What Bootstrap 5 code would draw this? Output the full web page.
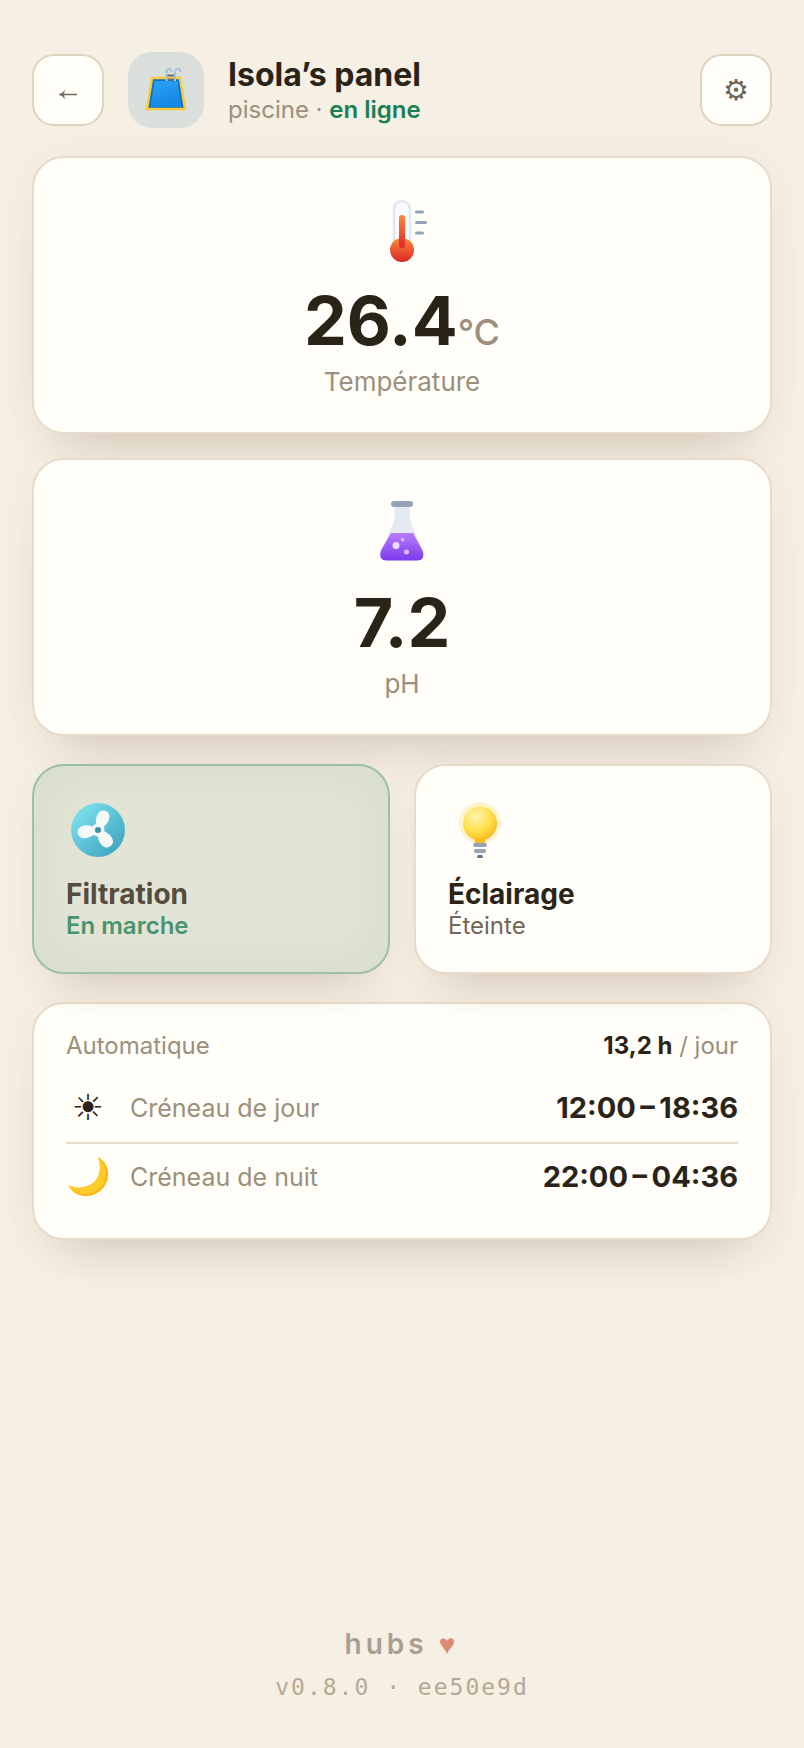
<!DOCTYPE html>
<html lang="fr">
<head>
<meta charset="utf-8">
<meta name="viewport" content="width=device-width, initial-scale=1">
<title>Isola’s panel</title>
<link href="https://cdn.jsdelivr.net/npm/bootstrap@5.3.0/dist/css/bootstrap.min.css" rel="stylesheet">
<style>
  :root {
    --ink: #2a2318;
    --soft: #73675a;
    --muted: #9c8f7c;
    --line: #e7dccb;
    --paper: #fffef8;
    --green: #1b7f55;
    --lift: 0 4px 48px rgba(150, 100, 50, .05), 0 32px 48px -32px rgba(90, 60, 35, .26);
  }
  body { background: #f5efe4; color: var(--ink); font-family: Inter, "Noto Sans", sans-serif; font-size: 24px; line-height: 32px; }
  .screen { padding: 52px 32px 45px; }
  .text-soft { color: var(--soft); }
  .text-quiet { color: var(--muted); }
  .text-live { color: var(--green); font-weight: 600; }
  .topbar { gap: 24px; margin-bottom: 28px; }
  .icon-btn { width: 72px; height: 72px; background: var(--paper); border: 2px solid #e0d3bd; border-radius: 22px; color: var(--soft); font-family: "DejaVu Sans", sans-serif; font-size: 29px; }
  .hub-tile { width: 76px; height: 76px; background: #dadfdb; border-radius: 24px; }
  .hub-name { padding-top: 2px; }
  .hub-title { font-size: 32px; line-height: 38px; font-weight: 700; }
  .panel { background: var(--paper); border: 2px solid var(--line); border-radius: 32px; box-shadow: var(--lift); color: var(--ink); }
  .metrics { gap: 24px; margin-bottom: 28px; }
  .metric { padding: 36px 32px 32px; }
  .metric-value { font-size: 68px; line-height: 72px; font-weight: 700; margin: 18px 0 8px; }
  .metric-unit { font-size: 36px; line-height: 36px; font-weight: 500; color: var(--muted); }
  .metric-label { font-size: 26px; line-height: 36px; color: var(--muted); }
  .switches { display: grid; grid-template-columns: 1fr 1fr; gap: 24px; margin-bottom: 28px; }
  .switch-tile { padding: 32px; }
  .switch-name { font-size: 28px; line-height: 36px; font-weight: 700; margin-top: 14px; }
  .switch-state { line-height: 28px; }
  .switch-tile.is-on { background: #e3e4d6; border-color: #9dbfa7; box-shadow: inset 0 0 56px rgba(27, 127, 85, .08), var(--lift); }
  .is-on .switch-name { color: #554c40; }
  .is-on .switch-state { color: #49946f; font-weight: 600; }
  .plan { padding: 26px 32px 28px; }
  .plan-head { margin-bottom: 12px; }
  .plan-total { color: var(--ink); font-weight: 700; }
  .slot { height: 66px; }
  .slot-day { height: 70px; border-bottom: 2px solid var(--line); }
  .slot-icon { width: 44px; margin-right: 20px; font-family: "DejaVu Sans", sans-serif; font-size: 36px; }
  .slot-label { font-size: 25px; line-height: 36px; color: var(--muted); }
  .slot-time { font-size: 29px; font-weight: 700; }
  .brand { font-size: 28px; line-height: 40px; font-weight: 600; letter-spacing: 4px; color: #a89e92; }
  .brand span { color: #da8b72; font-family: "Liberation Sans", "DejaVu Sans", sans-serif; font-size: 28px; font-weight: 400; }
  .version { font-family: "DejaVu Sans Mono", monospace; font-size: 23px; line-height: 32px; letter-spacing: 2px; color: #b5a993; margin-top: 6px; }
</style>
</head>
<body>
<div class="screen d-flex flex-column min-vh-100">
  <header class="topbar d-flex align-items-center">
    <button type="button" class="icon-btn d-flex align-items-center justify-content-center p-0" aria-label="Retour">
      <svg width="24" height="24" viewBox="0 0 24 24" fill="none" stroke="currentColor" aria-hidden="true"><path d="M4 16.500H21" stroke-width="1.500"/><path d="M3 16.500Q7 15.500 8.500 12.500L7.500 16.500L8.500 20.500Q7 17.500 3 16.500Z" fill="currentColor" stroke-width=".5"/></svg>
    </button>
    <div class="hub-tile d-flex align-items-center justify-content-center">
      <svg width="48" height="48" viewBox="0 0 48 48" aria-hidden="true">
        <defs><linearGradient id="water" x1="0" y1="0" x2="0.400" y2="1"><stop stop-color="#2ba2f5"/><stop offset="1" stop-color="#1388e4"/></linearGradient></defs>
        <path d="M10 12H38L43 43H5Z" fill="#0872c4" stroke="#ffca3a" stroke-width="2.500" stroke-linejoin="round"/>
        <path d="M12.500 15H35.500L39.500 41H8.500Z" fill="url(#water)"/>
        <path d="M25 9.500H32M25 13.500H32" stroke="#65727c" stroke-width="2"/>
        <path d="M24.500 15V6Q24.500 3 27.500 3Q29.500 3 29.500 6M33 15V6Q33 3 36 3Q38.500 3 38.500 6" fill="none" stroke="#abc1d9" stroke-width="2"/>
      </svg>
    </div>
    <div class="hub-name flex-grow-1">
      <h1 class="hub-title mb-0">Isola’s panel</h1>
      <div class="text-quiet">piscine · <span class="text-live">en ligne</span></div>
    </div>
    <button type="button" class="icon-btn d-flex align-items-center justify-content-center p-0" aria-label="Réglages">⚙</button>
  </header>

  <main>
    <section class="metrics d-flex flex-column">
      <div class="panel metric text-center">
        <svg class="d-block mx-auto" width="72" height="72" viewBox="0 0 72 72" aria-hidden="true">
          <defs><linearGradient id="heat" x1="0" y1="0" x2="0" y2="1"><stop stop-color="#fb8b3c"/><stop offset="1" stop-color="#dc2626"/></linearGradient></defs>
          <rect x="28" y="7" width="16" height="48" rx="8" fill="#f8fafc" stroke="#e2e8f0" stroke-width="2.500"/>
          <circle cx="36" cy="56" r="12" fill="url(#heat)"/>
          <rect x="33" y="21" width="6" height="33" rx="3" fill="url(#heat)"/>
          <path d="M50.500 18H56.500M50.500 28.500H59.500M50.500 39H56.500" stroke="#94a3b8" stroke-width="3" stroke-linecap="round"/>
        </svg>
        <div class="metric-value">26.4<span class="metric-unit">°C</span></div>
        <div class="metric-label">Température</div>
      </div>
      <div class="panel metric text-center">
        <svg class="d-block mx-auto" width="72" height="72" viewBox="0 0 72 72" aria-hidden="true">
          <defs><linearGradient id="acid" x1="0" y1="0" x2="0" y2="1"><stop stop-color="#b87cfb"/><stop offset="1" stop-color="#7c3aed"/></linearGradient></defs>
          <path d="M28.500 9H44V24L56.500 55Q59 64.500 51 64.500H21Q13 64.500 15 55L28.500 24Z" fill="#e4e9f2"/>
          <path d="M25 37H47L56.500 54.500Q59.500 64.500 51 64.500H21Q12 64.500 15 54.500Z" fill="url(#acid)"/>
          <rect x="25" y="5" width="22" height="6" rx="3" fill="#94a3b8"/>
          <g fill="#ecdcff"><circle cx="30" cy="49.500" r="3.500"/><circle cx="36.600" cy="43.600" r="1.800" opacity=".7"/><circle cx="40.500" cy="56" r="2.500" opacity=".8"/></g>
        </svg>
        <div class="metric-value">7.2</div>
        <div class="metric-label">pH</div>
      </div>
    </section>

    <section class="switches">
      <button type="button" class="panel switch-tile is-on text-start position-relative" aria-pressed="true">
        <svg class="d-block" width="64" height="64" viewBox="0 0 64 64" aria-hidden="true">
          <defs>
            <linearGradient id="fan" x1="0" y1="0" x2="1" y2="1"><stop offset=".1" stop-color="#7ee1ee"/><stop offset=".9" stop-color="#3fa5c0"/></linearGradient>
            <path id="blade" d="M0 0C-5 -4 -7.500 -11 -5.800 -16C-4.500 -22 4.500 -22 5.800 -16C7.500 -11 5 -4 0 0Z"/>
          </defs>
          <circle cx="32" cy="32" r="27" fill="url(#fan)"/>
          <g transform="translate(32 32)" fill="#f5f9fa">
            <use href="#blade" transform="rotate(22)"/><use href="#blade" transform="rotate(142)"/><use href="#blade" transform="rotate(262)"/>
            <circle r="6.500"/><circle r="3" fill="#3690a8"/>
          </g>
        </svg>
        <div class="switch-name">Filtration</div>
        <div class="switch-state">En marche</div>
      </button>
      <button type="button" class="panel switch-tile text-start" aria-pressed="false">
        <svg class="d-block" width="64" height="64" viewBox="0 0 64 64" aria-hidden="true">
          <defs><radialGradient id="glow" cx=".38" cy=".3" r=".75"><stop stop-color="#fef4b0"/><stop offset=".6" stop-color="#fde047"/><stop offset="1" stop-color="#fbb324"/></radialGradient></defs>
          <circle cx="32" cy="25" r="21" fill="#fef3cf"/>
          <path d="M26 37H38Q37 40 37 45H27Q27 40 26 37Z" fill="#fbb91f"/>
          <circle cx="32" cy="25.500" r="17" fill="url(#glow)"/>
          <path d="M27.500 40H36.500V45H27.500Z" fill="#fbb91f"/>
          <rect x="25" y="45" width="14" height="4" rx="2" fill="#94a3b8"/>
          <rect x="26" y="51" width="12" height="4" rx="2" fill="#94a3b8"/>
          <rect x="29" y="57" width="6" height="3" rx="1.500" fill="#64748b"/>
        </svg>
        <div class="switch-name">Éclairage</div>
        <div class="switch-state text-soft">Éteinte</div>
      </button>
    </section>

    <section class="panel plan">
      <div class="plan-head d-flex justify-content-between text-quiet">
        <span>Automatique</span>
        <span><span class="plan-total">13,2 h</span> / jour</span>
      </div>
      <div class="slot slot-day d-flex align-items-center">
        <span class="slot-icon text-center">☀</span>
        <span class="slot-label flex-grow-1">Créneau de jour</span>
        <span class="slot-time">12:00&#8201;–&#8201;18:36</span>
      </div>
      <div class="slot d-flex align-items-center">
        <span class="slot-icon d-flex justify-content-center">
          <svg width="42" height="42" viewBox="0 0 42 42" aria-hidden="true"><path d="M31 1C41 7 44 19 38 29C30 43 9 44 1 29C12 34 25 31 30 22C34 15 33 8 31 1Z" fill="#ffca2c"/><path d="M31 1C41 7 44 19 38 29C30 43 9 44 1 29C12 43 29 39 36 28C41 19 39 9 31 1Z" fill="#fdb714"/></svg>
        </span>
        <span class="slot-label flex-grow-1">Créneau de nuit</span>
        <span class="slot-time">22:00&#8201;–&#8201;04:36</span>
      </div>
    </section>
  </main>

  <footer class="mt-auto text-center">
    <div class="brand">hubs <span>♥</span></div>
    <div class="version">v0.8.0 · ee50e9d</div>
  </footer>
</div>
<script src="https://cdn.jsdelivr.net/npm/bootstrap@5.3.0/dist/js/bootstrap.bundle.min.js"></script>
</body>
</html>
